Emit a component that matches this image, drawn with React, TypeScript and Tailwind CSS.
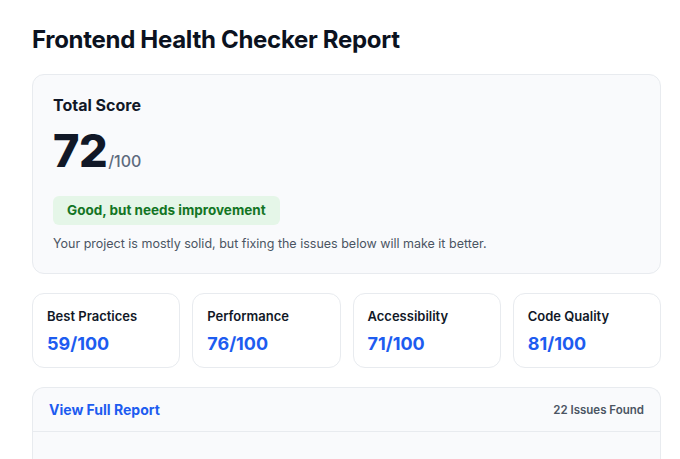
import React from "react";

const stats = [
  { label: "Best Practices", value: "59/100" },
  { label: "Performance", value: "76/100" },
  { label: "Accessibility", value: "71/100" },
  { label: "Code Quality", value: "81/100" },
];

export default function App() {
  return (
    <div
      className="min-h-[459px] bg-white pl-[32px] pr-[19px] pt-[26px]"
      style={{ fontFamily: "Inter, 'Noto Sans', sans-serif" }}
    >
      <h1 className="text-[24px] font-bold leading-[28px] tracking-[-0.3px] text-[#0b1220]">
        Frontend Health Checker Report
      </h1>
      <div className="mt-[20px] rounded-[12px] border border-[#e8ebef] bg-[#f9fafc] px-[20px] pt-[19px] pb-[20px]">
        <div className="text-[16px] font-bold leading-[22px] text-[#111827]">Total Score</div>
        <div className="mt-[11px] flex items-baseline">
          <span className="text-[45px] font-extrabold leading-[48px] tracking-[-0.5px] text-[#111827]">72</span>
          <span className="ml-[1px] text-[16px] font-medium text-[#5e6b7e]">/100</span>
        </div>
        <div className="mt-[21px] inline-block rounded-[6px] bg-[#e5f6e8] px-[14px] py-[5px] text-[13.5px] font-bold leading-[19px] text-[#137524]">
          Good, but needs improvement
        </div>
        <p className="mt-[10px] text-[12.5px] leading-[18px] text-[#4b5563]">
          Your project is mostly solid, but fixing the issues below will make it better.
        </p>
      </div>
      <div className="mt-[19px] grid grid-cols-4 gap-[12px]">
        {stats.map((s) => (
          <div
            key={s.label}
            className="rounded-[12px] border border-[#e8ebef] bg-white px-[14px] pt-[13px] pb-[11px]"
          >
            <div className="text-[13px] font-semibold leading-[18px] text-[#111827]">{s.label}</div>
            <div className="mt-[7px] text-[18px] font-bold leading-[24px] text-[#1d5cf0]">{s.value}</div>
          </div>
        ))}
      </div>
      <div className="mt-[19px] rounded-t-[12px] border border-b-0 border-[#e8ebef] bg-[#f9fafc]">
        <div className="flex items-center justify-between border-b border-[#e8ebef] px-[16px] pt-[12px] pb-[11px]">
          <span className="text-[14px] font-bold leading-[20px] text-[#1d5cf0]">View Full Report</span>
          <span className="text-[11.5px] font-semibold leading-[20px] text-[#4b5563]">22 Issues Found</span>
        </div>
        <div className="h-[40px]" />
      </div>
    </div>
  );
}
